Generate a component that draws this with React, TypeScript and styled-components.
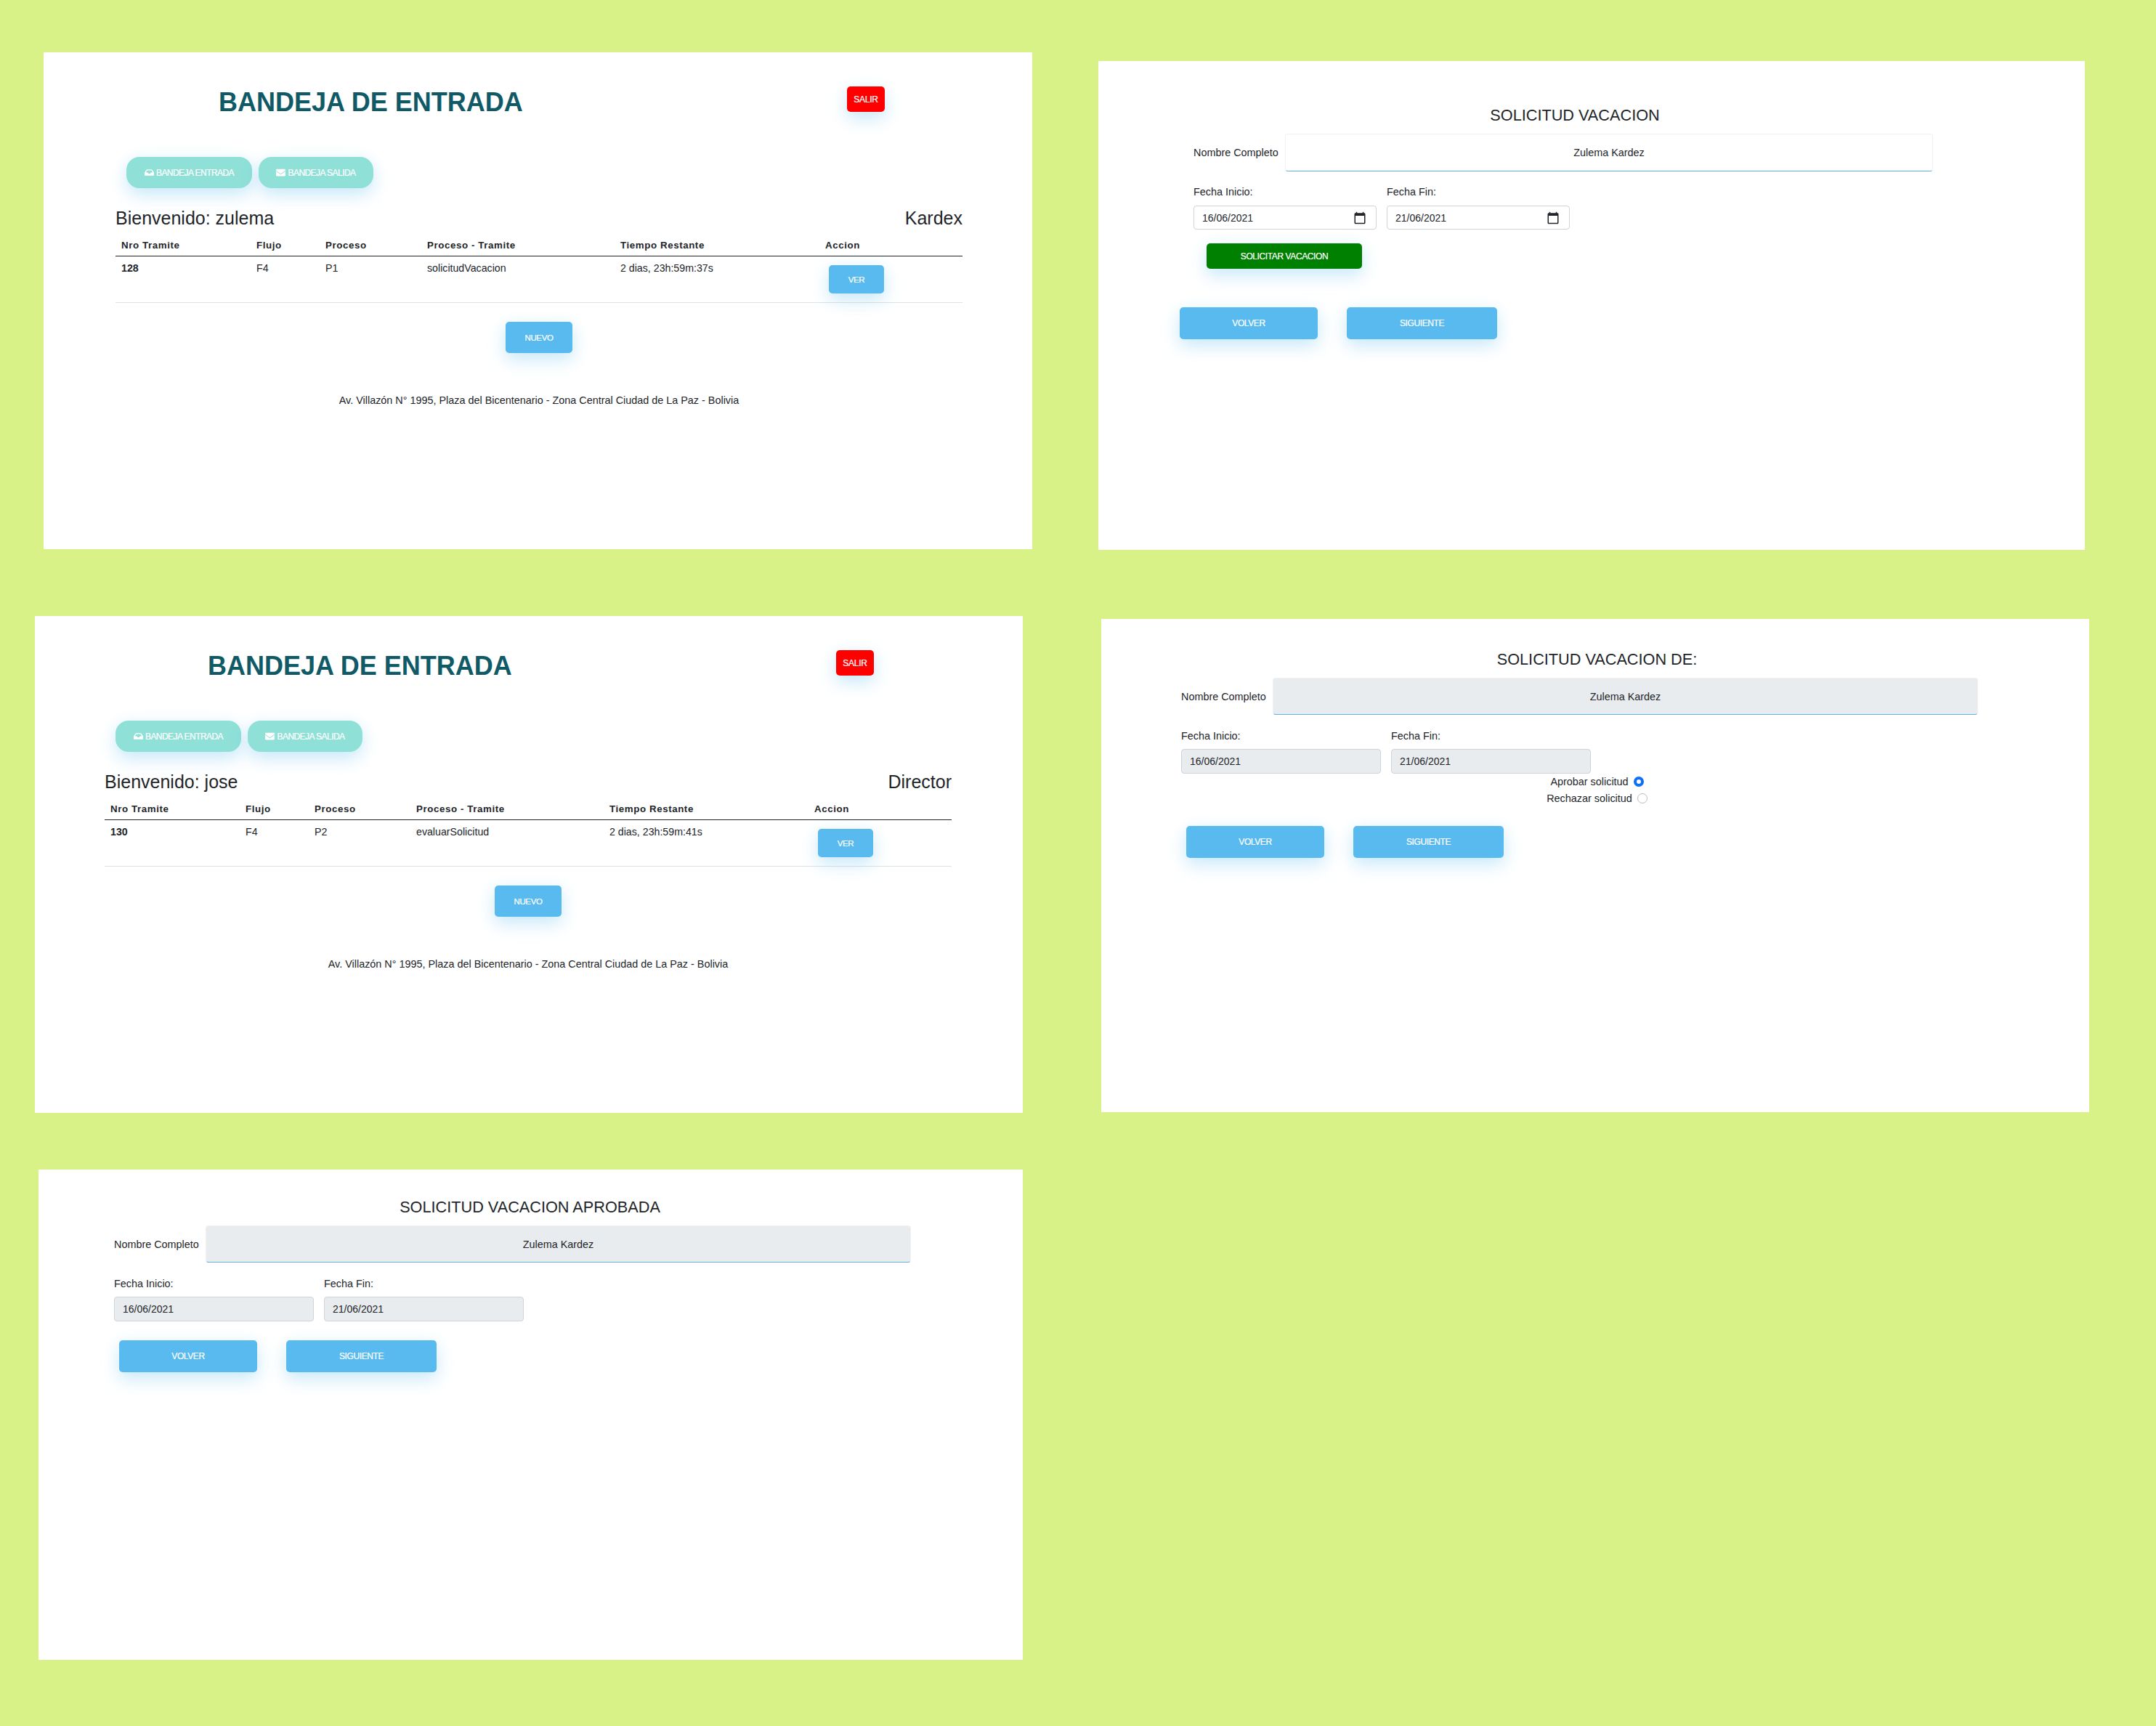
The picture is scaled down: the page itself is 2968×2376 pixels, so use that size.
import React from 'react'
import styled, { createGlobalStyle } from 'styled-components'
import { FaInbox, FaEnvelope } from 'react-icons/fa'

const BLUE_SHADOW = '0 10px 24px rgba(88, 186, 238, 0.28), 0 2px 20px rgba(88, 186, 238, 0.08)'

const GlobalStyle = createGlobalStyle`
  html, body {
    margin: 0;
    padding: 0;
    background: #d8f287;
  }
  body {
    font-family: "Liberation Sans", Arial, sans-serif;
    color: #212529;
  }
  * {
    box-sizing: border-box;
  }
`

const Page = styled.div`
  display: flex;
  align-items: flex-start;
  width: 2968px;
  height: 2376px;
  overflow: hidden;
`

const Column = styled.div<{ $width: number; $top: number }>`
  display: flex;
  flex-direction: column;
  flex: none;
  width: ${p => p.$width}px;
  padding-top: ${p => p.$top}px;
`

const Panel = styled.section<{ $left: number; $width: number; $height: number; $below: number; $pad: string }>`
  flex: none;
  width: ${p => p.$width}px;
  height: ${p => p.$height}px;
  margin-left: ${p => p.$left}px;
  margin-bottom: ${p => p.$below}px;
  padding: ${p => p.$pad};
  background: #fff;
`

/* botones */
const Button = styled.button<{ $color?: string }>`
  display: inline-flex;
  align-items: center;
  justify-content: center;
  border: 0;
  border-radius: 5px;
  background: ${p => p.$color || '#58baee'};
  box-shadow: ${BLUE_SHADOW};
  color: #fff;
  font-family: inherit;
  font-size: 12px;
  letter-spacing: -0.4px;
  -webkit-text-stroke: 0.2px #fff;
  padding: 0;
`

const ExitButton = styled(Button)`
  width: 52px;
  height: 35px;
  margin-right: 107px;
  letter-spacing: -0.2px;
`

const SeeButton = styled(Button)`
  width: 76px;
  height: 39px;
  font-size: 11.5px;
`

const NewButton = styled(Button)`
  width: 92px;
  height: 43px;
  font-size: 11.5px;
`

const TabButton = styled(Button)<{ $width: number }>`
  width: ${p => p.$width}px;
  height: 43px;
  gap: 3px;
  border-radius: 18px;
  background: #8fe0d7;
  letter-spacing: -0.55px;
  svg {
    font-size: 13px;
  }
`

const WideButton = styled(Button)<{ $width: number }>`
  width: ${p => p.$width}px;
  height: 44px;
`

const SubmitButton = styled(Button)`
  width: 214px;
  height: 35px;
  margin: 19px 0 0 18px;
`

/* bandeja */
const HeaderRow = styled.header`
  display: flex;
  justify-content: space-between;
  align-items: flex-start;
  height: 97px;
`

const InboxTitle = styled.h1`
  margin: 0 0 0 142px;
  padding-top: 1px;
  color: #0f5a66;
  font-size: 36px;
  line-height: 42px;
  font-weight: 700;
`

const Tabs = styled.nav`
  display: flex;
  gap: 9px;
  margin-left: 15px;
`

const WelcomeRow = styled.div`
  display: flex;
  justify-content: space-between;
  margin-top: 27px;
  padding-bottom: 1px;
  font-size: 25px;
  line-height: 28px;
`

const Table = styled.table`
  width: 100%;
  border-collapse: collapse;
  table-layout: fixed;
  font-size: 14.2px;
  line-height: 16px;
`

const Th = styled.th<{ $width: number }>`
  width: ${p => p.$width}px;
  padding: 15px 8px 6px;
  border-bottom: 1px solid #212529;
  text-align: left;
  font-size: 13.3px;
  letter-spacing: 0.6px;
`

const Td = styled.td<{ $bold?: boolean }>`
  padding: 8px;
  vertical-align: top;
  border-bottom: 1px solid #dee2e6;
  font-weight: ${p => (p.$bold ? 700 : 400)};
`

const ActionTd = styled(Td)`
  padding: 12px 0 12px 13px;
`

const CenterRow = styled.div`
  display: flex;
  justify-content: center;
  margin-top: 26px;
`

const Address = styled.p`
  margin: 57px 0 0;
  text-align: center;
  font-size: 14.4px;
  line-height: 16px;
`

/* formularios */
const Form = styled.form<{ $width: number }>`
  width: ${p => p.$width}px;
`

const FormTitle = styled.h2<{ $shift: number }>`
  margin: 0 0 12px;
  padding-left: ${p => p.$shift}px;
  text-align: center;
  font-size: 21.7px;
  line-height: 26px;
  font-weight: 400;
`

const NameRow = styled.div`
  display: flex;
  align-items: center;
  gap: 10px;
`

const FieldLabel = styled.label`
  flex: none;
  width: 116px;
  font-size: 14.4px;
  line-height: 16px;
  white-space: nowrap;
`

const NameInput = styled.input<{ $height: number }>`
  flex: 1;
  height: ${p => p.$height}px;
  border: 1px solid #f1f1f1;
  border-bottom: 1px solid #63b3e0;
  border-radius: 4px;
  background: #fff;
  color: #212529;
  font-family: inherit;
  font-size: 14.4px;
  text-align: center;
  outline: none;
  &:disabled {
    background: #e9ecef;
    opacity: 1;
  }
`

const DatesRow = styled.div<{ $top: number }>`
  display: flex;
  gap: 14px;
  margin-top: ${p => p.$top}px;
`

const DateColumn = styled.div<{ $width: number; $gap: number }>`
  display: flex;
  flex-direction: column;
  gap: ${p => p.$gap}px;
  width: ${p => p.$width}px;
`

const DateLabel = styled.span`
  font-size: 14.4px;
  line-height: 16px;
`

const DateBox = styled.div<{ $locked?: boolean }>`
  display: flex;
  align-items: center;
  justify-content: space-between;
  height: ${p => (p.$locked ? 34 : 33)}px;
  padding: 0 13px 0 11px;
  border: 1px solid #ced4da;
  border-radius: 4px;
  background: ${p => (p.$locked ? '#e9ecef' : '#fff')};
  font-size: 14px;
  svg {
    width: 18px;
    height: 18px;
  }
`

const RadioGroup = styled.div<{ $shift: number }>`
  display: flex;
  flex-direction: column;
  align-items: center;
  padding-left: ${p => p.$shift}px;
`

const RadioRow = styled.label`
  display: flex;
  align-items: center;
  gap: 7px;
  height: 23px;
  padding-bottom: 1px;
  font-size: 14.4px;
`

const Radio = styled.span<{ $on?: boolean }>`
  flex: none;
  width: 14px;
  height: 14px;
  border-radius: 50%;
  border: ${p => (p.$on ? '4px solid #0d6efd' : '1px solid #bdbdbd')};
  background: #fff;
`

const ButtonRow = styled.div<{ $top: number; $left: number }>`
  display: flex;
  gap: 40px;
  margin: ${p => p.$top}px 0 0 ${p => p.$left}px;
`

const CalendarIcon = () => (
  <svg viewBox="0 0 24 24" fill="currentColor">
    <path d="M20 3h-1V1h-2v2H7V1H5v2H4c-1.1 0-2 .9-2 2v16c0 1.1.9 2 2 2h16c1.1 0 2-.9 2-2V5c0-1.1-.9-2-2-2zm0 18H4V8h16v13z" />
  </svg>
)

interface InboxProps {
  user: string
  role: string
  id: string
  step: string
  task: string
  time: string
}

const Inbox: React.FC<InboxProps> = ({ user, role, id, step, task, time }) => (
  <>
    <HeaderRow>
      <InboxTitle>BANDEJA DE ENTRADA</InboxTitle>
      <ExitButton $color="#ff0000">SALIR</ExitButton>
    </HeaderRow>
    <Tabs>
      <TabButton $width={173}>
        <FaInbox />
        BANDEJA ENTRADA
      </TabButton>
      <TabButton $width={158}>
        <FaEnvelope />
        BANDEJA SALIDA
      </TabButton>
    </Tabs>
    <WelcomeRow>
      <span>Bienvenido: {user}</span>
      <span>{role}</span>
    </WelcomeRow>
    <Table>
      <thead>
        <tr>
          <Th $width={186}>Nro Tramite</Th>
          <Th $width={95}>Flujo</Th>
          <Th $width={140}>Proceso</Th>
          <Th $width={266}>Proceso - Tramite</Th>
          <Th $width={282}>Tiempo Restante</Th>
          <Th $width={197}>Accion</Th>
        </tr>
      </thead>
      <tbody>
        <tr>
          <Td $bold>{id}</Td>
          <Td>F4</Td>
          <Td>{step}</Td>
          <Td>{task}</Td>
          <Td>{time}</Td>
          <ActionTd>
            <SeeButton>VER</SeeButton>
          </ActionTd>
        </tr>
      </tbody>
    </Table>
    <CenterRow>
      <NewButton>NUEVO</NewButton>
    </CenterRow>
    <Address>Av. Villazón N° 1995, Plaza del Bicentenario - Zona Central Ciudad de La Paz - Bolivia</Address>
  </>
)

interface RequestProps {
  title: string
  width: number
  shift: number
  dateWidth: number
  locked?: boolean
  nameHeight: number
  datesTop: number
  children: React.ReactNode
}

const RequestForm: React.FC<RequestProps> = ({ title, width, shift, dateWidth, locked, nameHeight, datesTop, children }) => (
  <Form $width={width}>
    <FormTitle $shift={shift}>{title}</FormTitle>
    <NameRow>
      <FieldLabel>Nombre Completo</FieldLabel>
      <NameInput $height={nameHeight} value="Zulema Kardez" disabled={locked} readOnly />
    </NameRow>
    <DatesRow $top={datesTop}>
      <DateColumn $width={dateWidth} $gap={locked ? 10 : 11}>
        <DateLabel>Fecha Inicio:</DateLabel>
        <DateBox $locked={locked}>
          16/06/2021
          {!locked && <CalendarIcon />}
        </DateBox>
      </DateColumn>
      <DateColumn $width={dateWidth} $gap={locked ? 10 : 11}>
        <DateLabel>Fecha Fin:</DateLabel>
        <DateBox $locked={locked}>
          21/06/2021
          {!locked && <CalendarIcon />}
        </DateBox>
      </DateColumn>
    </DatesRow>
    {children}
  </Form>
)

const NavButtons: React.FC<{ top: number; left: number }> = ({ top, left }) => (
  <ButtonRow $top={top} $left={left}>
    <WideButton $width={190}>VOLVER</WideButton>
    <WideButton $width={207}>SIGUIENTE</WideButton>
  </ButtonRow>
)

export default function App() {
  return (
    <Page>
      <GlobalStyle />
      <Column $width={1512} $top={72}>
        <Panel $left={60} $width={1361} $height={684} $below={92} $pad="47px 96px 0 99px">
          <Inbox user="zulema" role="Kardex" id="128" step="P1" task="solicitudVacacion" time="2 dias, 23h:59m:37s" />
        </Panel>
        <Panel $left={48} $width={1360} $height={684} $below={78} $pad="47px 98px 0 96px">
          <Inbox user="jose" role="Director" id="130" step="P2" task="evaluarSolicitud" time="2 dias, 23h:59m:41s" />
        </Panel>
        <Panel $left={53} $width={1355} $height={675} $below={0} $pad="39px 0 0 104px">
          <RequestForm title="SOLICITUD VACACION APROBADA" width={1097} shift={48} dateWidth={275} locked nameHeight={51} datesTop={21}>
            <NavButtons top={26} left={7} />
          </RequestForm>
        </Panel>
      </Column>
      <Column $width={1456} $top={84}>
        <Panel $left={0} $width={1358} $height={673} $below={95} $pad="62px 0 0 131px">
          <RequestForm title="SOLICITUD VACACION" width={1018} shift={32} dateWidth={252} nameHeight={52} datesTop={20}>
            <SubmitButton $color="#008000">SOLICITAR VACACION</SubmitButton>
            <NavButtons top={53} left={-19} />
          </RequestForm>
        </Panel>
        <Panel $left={4} $width={1360} $height={679} $below={0} $pad="43px 0 0 110px">
          <RequestForm title="SOLICITUD VACACION DE:" width={1097} shift={48} dateWidth={275} locked nameHeight={51} datesTop={21}>
            <RadioGroup $shift={48}>
              <RadioRow>
                Aprobar solicitud
                <Radio $on />
              </RadioRow>
              <RadioRow>
                Rechazar solicitud
                <Radio />
              </RadioRow>
            </RadioGroup>
            <NavButtons top={26} left={7} />
          </RequestForm>
        </Panel>
      </Column>
    </Page>
  )
}
